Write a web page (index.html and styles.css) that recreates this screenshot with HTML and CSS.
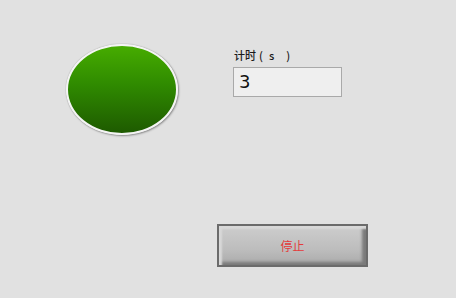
FILE: index.html
```html
<!DOCTYPE html>
<html>
<head>
    <title>计时</title>
    <link rel="stylesheet" href="styles.css">
</head>
<body>
    <div class="panel">
        <div class="top-row">
            <div class="led"></div>
            <div class="field">
                <label class="field-label">计时<span class="paren-l">(</span>s<span class="paren-r">)</span></label>
                <div class="field-box">3</div>
            </div>
        </div>
        <button class="stop-btn">停止</button>
    </div>
</body>
</html>
```

FILE: styles.css
```css
body {
    margin: 0;
    background: #e1e1e1;
    font-family: "Noto Sans CJK SC", "DejaVu Sans", sans-serif;
}
.panel {
    width: 456px;
    height: 298px;
    padding-top: 44px;
    box-sizing: border-box;
}
.top-row {
    display: flex;
    align-items: flex-start;
}
.led {
    width: 108px;
    height: 87px;
    margin-left: 66px;
    border-radius: 50%;
    border: 2px solid #f4f4f4;
    background: linear-gradient(to bottom, #46ac00, #2f8a00 45%, #1e5a00);
    box-shadow: 1px 1px 2px rgba(0, 0, 0, 0.35), 0 0 1px rgba(0, 0, 0, 0.4);
}
.field {
    margin-left: 55px;
    margin-top: 4px;
    display: flex;
    flex-direction: column;
}
.field-label {
    font-size: 11px;
    line-height: 14px;
    color: #1a1a1a;
    padding-left: 1px;
    margin-bottom: 5px;
    font-weight: 500;
}
.paren-l {
    margin: 0 6px 0 3px;
}
.paren-r {
    margin-left: 12px;
}
.field-box {
    width: 102px;
    height: 28px;
    border: 1px solid #a9a9a9;
    background: #efefef;
    font-family: "DejaVu Sans", sans-serif;
    font-size: 18px;
    line-height: 28px;
    padding-left: 5px;
    color: #111;
}
.stop-btn {
    display: block;
    margin-left: 217px;
    margin-top: 89px;
    width: 151px;
    height: 43px;
    border: 2px solid #6b6b6b;
    background: linear-gradient(to bottom, #cdcdcd, #bdbdbd 60%, #aaaaaa);
    box-shadow: inset 3px 3px 2px #d8d8d8, inset -4px -3px 3px #7a7a7a;
    color: #e43a3a;
    font-family: "Noto Sans CJK SC", sans-serif;
    font-size: 12px;
    padding: 0;
}
```
